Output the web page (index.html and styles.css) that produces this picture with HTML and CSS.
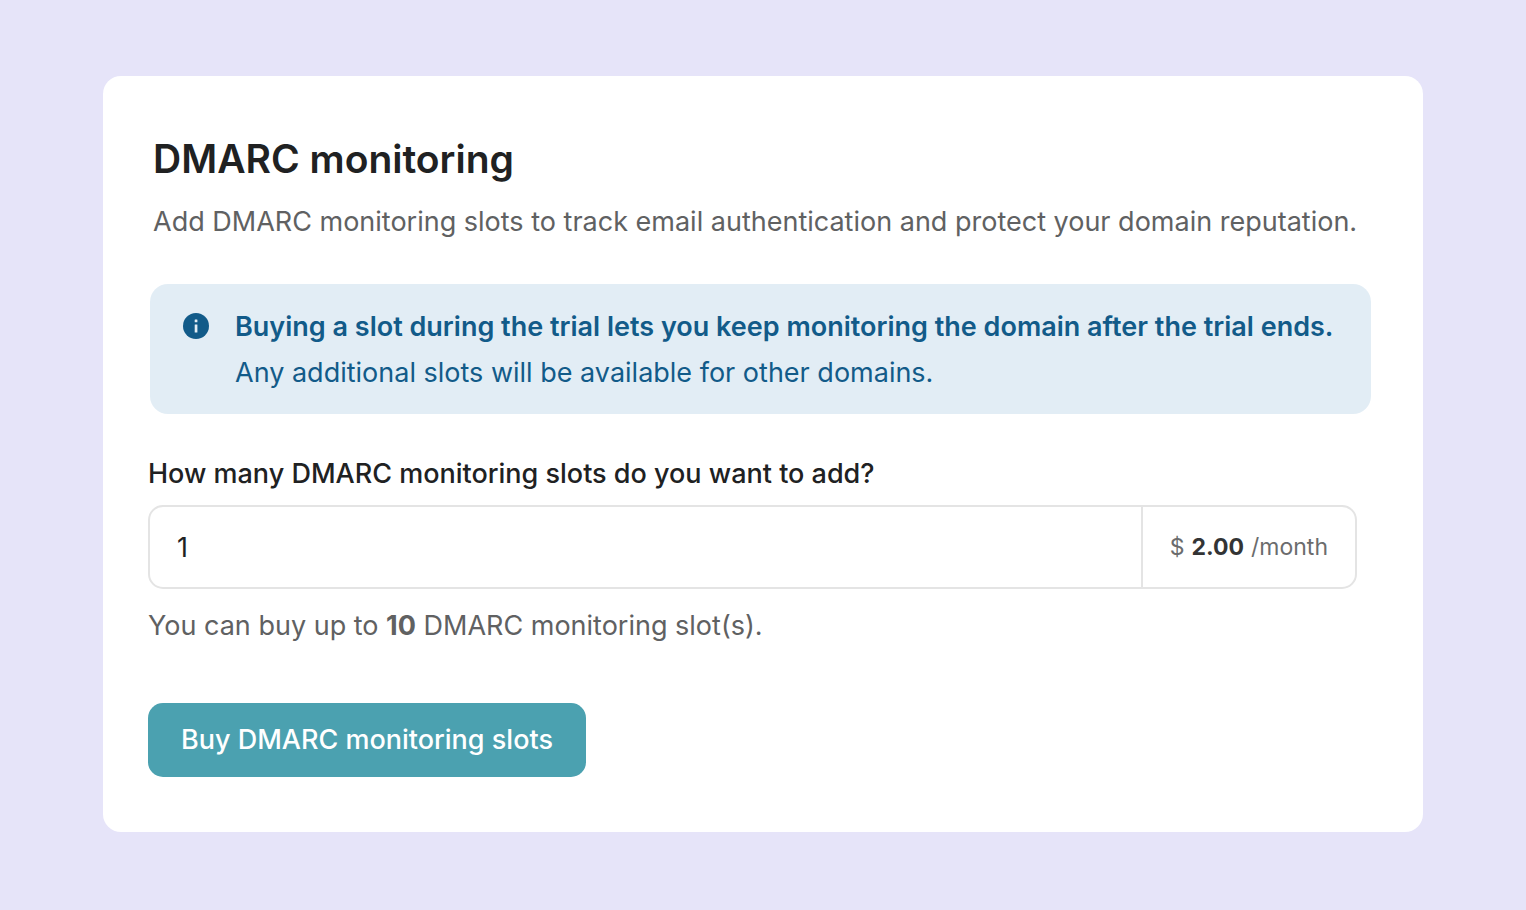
FILE: index.html
```html
<!DOCTYPE html>
<html lang="en">
<head>
  <meta charset="UTF-8" />
  <meta name="viewport" content="width=device-width, initial-scale=1.0"/>
  <title>DMARC monitoring</title>
  <link rel="stylesheet" href="styles.css">
</head>
<body>

  <main class="card">
    <header class="card-header">
      <h1>DMARC monitoring</h1>
      <p>Add DMARC monitoring slots to track email authentication and protect your domain reputation.</p>
    </header>

    <div class="notice">
      <svg class="notice-icon" viewBox="0 0 26 26" aria-hidden="true">
        <circle cx="13" cy="13" r="13" fill="#125b89"/>
        <rect x="11.7" y="6.6" width="2.7" height="2.7" rx="0.3" fill="#e2edf5"/>
        <rect x="11.7" y="11.4" width="2.7" height="8.2" rx="0.3" fill="#e2edf5"/>
      </svg>
      <div class="notice-text">
        <strong>Buying a slot during the trial lets you keep monitoring the domain after the trial ends.</strong>
        <p>Any additional slots will be available for other domains.</p>
      </div>
    </div>

    <form class="slots-form">
      <label for="slots">How many DMARC monitoring slots do you want to add?</label>
      <div class="input-group">
        <input type="text" inputmode="numeric" id="slots" value="1">
        <span class="price">$ <b>2.00</b> /month</span>
      </div>
      <p class="hint">You can buy up to <b>10</b> DMARC monitoring slot(s).</p>
      <button type="submit" class="buy-btn">Buy DMARC monitoring slots</button>
    </form>
  </main>

</body>
</html>
```

FILE: styles.css
```css
* {
  box-sizing: border-box;
}

body {
  margin: 0;
  padding: 76px 103px;
  min-height: 100vh;
  font-family: Inter, "Liberation Sans", sans-serif;
  font-size: 27px;
  line-height: 34px;
  color: #202122;
  background: #e6e4f9;
}

h1,
p {
  margin: 0;
}

.card {
  padding: 59px 52px 55px 45px;
  background: #fff;
  border-radius: 18px;
}

.card-header {
  padding-left: 5px;
}

h1 {
  font-size: 39px;
  line-height: 48px;
  font-weight: 600;
}

.card-header p {
  margin-top: 22px;
  color: #606162;
}

.notice {
  display: flex;
  gap: 26px;
  margin: 45px 0 43px 2px;
  padding: 26px 32px 24px 33px;
  color: #125b89;
  background: #e2edf5;
  border-radius: 18px;
}

.notice-icon {
  flex: none;
  width: 26px;
  height: 26px;
  margin-top: 3px;
}

.notice-text strong {
  font-weight: 600;
}

.notice-text p {
  margin-top: 12px;
}

.slots-form {
  padding-right: 14px;
}

.slots-form label {
  display: block;
  font-weight: 500;
}

.input-group {
  display: flex;
  height: 84px;
  margin-top: 14px;
  border: 2px solid #e4e4e4;
  border-radius: 15px;
}

.input-group input {
  flex: 1;
  min-width: 0;
  padding: 2px 27px 0;
  font: inherit;
  color: inherit;
  background: transparent;
  border: none;
  outline: none;
}

.price {
  display: flex;
  align-items: center;
  gap: 7px;
  padding: 0 27px;
  font-size: 23px;
  color: #6b6c6d;
  border-left: 2px solid #e4e4e4;
}

.price b {
  font-weight: 700;
  color: #333435;
}

.hint {
  margin-top: 20px;
  color: #606162;
}

.hint b {
  font-weight: 700;
}

.buy-btn {
  margin-top: 60px;
  padding: 20px 33px;
  font: inherit;
  font-weight: 500;
  line-height: 34px;
  color: #fff;
  background: #4ba1b0;
  border: none;
  border-radius: 15px;
  cursor: pointer;
}
```
